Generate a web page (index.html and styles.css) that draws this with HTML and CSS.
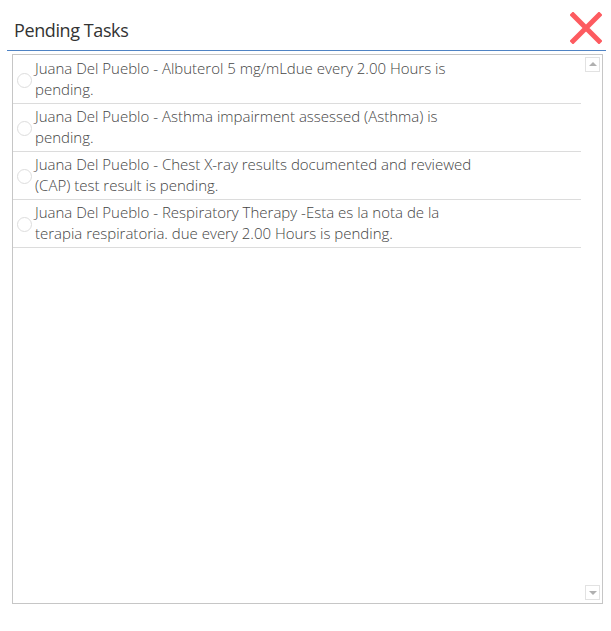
FILE: index.html
```html
<!DOCTYPE html>
<html>
<head>
<meta charset="utf-8">
<link rel="stylesheet" href="styles.css">
</head>
<body>
<div class="dialog">
  <div class="header">
    <h1 class="title">Pending Tasks</h1>
    <button class="close" aria-label="Close">
      <svg width="32" height="32" viewBox="0 0 32 32"><path d="M3 3 L29 29 M29 3 L3 29" stroke="#fd5b60" stroke-width="5" stroke-linecap="square" fill="none"/></svg>
    </button>
  </div>
  <div class="list-box">
    <ul class="tasks">
      <li class="task"><span class="radio"></span><span class="text">Juana Del Pueblo - Albuterol 5 mg/mLdue every 2.00 Hours is<br>pending.</span></li>
      <li class="task"><span class="radio"></span><span class="text">Juana Del Pueblo - Asthma impairment assessed (Asthma) is<br>pending.</span></li>
      <li class="task"><span class="radio"></span><span class="text">Juana Del Pueblo - Chest X-ray results documented and reviewed<br>(CAP) test result is pending.</span></li>
      <li class="task"><span class="radio"></span><span class="text">Juana Del Pueblo - Respiratory Therapy -Esta es la nota de la<br>terapia respiratoria. due every 2.00 Hours is pending.</span></li>
    </ul>
    <div class="scrollbar">
      <span class="arrow up"></span>
      <span class="arrow down"></span>
    </div>
  </div>
</div>
</body>
</html>
```

FILE: styles.css
```css
html, body {
  margin: 0;
  padding: 0;
  background: #ffffff;
}
body {
  font-family: "Open Sans", "Noto Sans", sans-serif;
  color: #444444;
}
.dialog {
  width: 611px;
  height: 631px;
  box-sizing: border-box;
  padding: 0 5px 0 7px;
}
.header {
  display: flex;
  align-items: center;
  justify-content: space-between;
  height: 50px;
  border-bottom: 1px solid #4f83c4;
}
.title {
  margin: 10px 0 0 7px;
  font-size: 18px;
  letter-spacing: -0.4px;
  font-weight: 400;
  color: #333333;
}
.close {
  border: 0;
  background: none;
  padding: 0;
  margin: 6px 4px 0 0;
  width: 32px;
  height: 32px;
  display: flex;
}
.list-box {
  margin: 3px 0 0 5px;
  width: 591px;
  height: 550px;
  box-sizing: border-box;
  border: 1px solid #c6c6c6;
  display: flex;
}
.tasks {
  list-style: none;
  margin: 0;
  padding: 1px 0 0 0;
  width: 568px;
}
.task {
  display: flex;
  align-items: center;
  height: 48px;
  box-sizing: border-box;
  padding: 0 0 2px 4px;
  border-bottom: 1px solid #dcdcdc;
}
.radio {
  flex: none;
  width: 13px;
  height: 13px;
  border: 1px solid #dddddd;
  border-radius: 50%;
  margin: 4px 3px 0 0;
}
.text {
  font-size: 15px;
  line-height: 21px;
  font-weight: 300;
  color: #444444;
}
.scrollbar {
  flex: 1;
  display: flex;
  flex-direction: column;
  justify-content: space-between;
  align-items: center;
  padding: 2px 0 3px 2px;
}
.arrow {
  width: 13px;
  height: 13px;
  border: 1px solid #e2e2e2;
  position: relative;
}
.arrow::after {
  content: "";
  position: absolute;
  left: 3px;
  border-left: 4px solid transparent;
  border-right: 4px solid transparent;
}
.arrow.up::after {
  top: 4px;
  border-bottom: 4px solid #b0b0b0;
}
.arrow.down::after {
  top: 5px;
  border-top: 4px solid #b0b0b0;
}
```
